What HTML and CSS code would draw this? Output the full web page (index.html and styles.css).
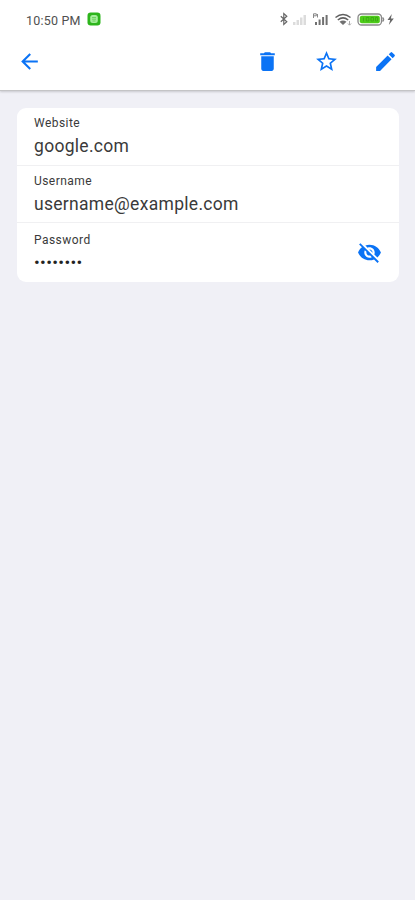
FILE: index.html
```html
<!DOCTYPE html>
<html lang="en">
<head>
<meta charset="utf-8">
<meta name="viewport" content="width=device-width, initial-scale=1">
<title>Password details</title>
<link rel="stylesheet" href="styles.css">
</head>
<body>
<header class="header">
  <div class="status">
    <span class="time">10:50 PM</span>
    <svg class="app" viewBox="0 0 14 14"><rect x=".5" y=".5" width="13" height="13" rx="3.2" fill="#2db51c"/><rect x="3.2" y="3" width="7.6" height="8" rx="2.5" fill="#a5ee9c"/><path d="M5 5.5h4M5 7.2h4M5.5 9h3" stroke="#5fca52" stroke-width=".8"/></svg>
    <svg class="system" viewBox="0 0 118 16" fill="none">
      <path d="M1.800 5.200l6 5.600-3 2.700v-11l3 2.700-6 5.600" stroke="#666" stroke-width="1.200"/>
      <g fill="#dcdcdc"><path d="M14 11h2.500v3H14zM17.500 9H20v5h-2.500zM21 6.500h2.500V14H21zM24.500 4H27v10h-2.500z"/></g>
      <g fill="#707070"><path d="M36 11h2v3h-2zM39.600 8.500h2V14h-2zM43.100 6h2v8h-2zM46.600 4h2v10h-2z"/></g>
      <path d="M34.500 7V2.800h2.800v2h-2.500M38.500 3v3.500" stroke="#888" stroke-width="1"/>
      <path d="M56.500 6.500q7.500-6 15 0M58.800 9q5.200-4.300 10.400 0" stroke="#606060" stroke-width="1.500"/>
      <path d="M60.500 10.800q3.500-2.500 7 0L64 14z" fill="#707070"/>
      <path d="M70.500 10v4M68.900 12.500l1.600 1.700 1.600-1.700" stroke="#aaa" stroke-width="1"/>
      <rect x="79" y="3" width="23.500" height="11" rx="3.500" stroke="#888" stroke-width="1.300"/>
      <path d="M103.500 6.500q2 2 0 4" stroke="#888" stroke-width="1.500"/>
      <rect x="80.800" y="4.800" width="20" height="7.400" rx="2" fill="#4dcc18"/>
      <path d="M84.500 6.500v4M87.300 6.500h2.500v3.500h-2.500zM92 6.500h2.500v3.500H92zM96.500 6.500h2v3.500h-2z" stroke="#38a515" stroke-width=".8"/>
      <path d="M112.800 3l-4.300 6h2.700l-1.400 5 5-6.500h-2.900z" fill="#666"/>
    </svg>
  </div>
  <nav class="toolbar">
    <svg class="icon" viewBox="0 0 24 24"><path d="M20 11H7.830l5.590-5.590L12 4l-8 8 8 8 1.410-1.410L7.830 13H20v-2z"/></svg>
    <div class="actions">
      <svg class="icon" viewBox="0 0 24 24"><path d="M6 19c0 1.100.9 2 2 2h8c1.100 0 2-.9 2-2V7H6v12zM19 4h-3.500l-1-1h-5l-1 1H5v2h14V4z"/></svg>
      <svg class="icon" viewBox="0 0 24 24"><path d="M22 9.240l-7.190-.62L12 2 9.190 8.630 2 9.240l5.460 4.730L5.820 21 12 17.270 18.180 21l-1.630-7.030L22 9.240zM12 15.400l-3.760 2.270 1-4.280-3.320-2.880 4.380-.38L12 6.100l1.710 4.040 4.380.38-3.320 2.880 1 4.280L12 15.400z"/></svg>
      <svg class="icon" viewBox="0 0 24 24"><path d="M3 17.250V21h3.750L17.810 9.940l-3.750-3.750L3 17.250zM20.710 7.040a1 1 0 0 0 0-1.410l-2.340-2.340a1 1 0 0 0-1.410 0l-1.830 1.830 3.750 3.750 1.830-1.830z"/></svg>
    </div>
  </nav>
</header>
<main class="card">
  <section class="row">
    <div class="label">Website</div>
    <div class="value">google.com</div>
  </section>
  <section class="row">
    <div class="label">Username</div>
    <div class="value">username@example.com</div>
  </section>
  <section class="row secret">
    <div>
      <div class="label">Password</div>
      <div class="value dots">••••••••</div>
    </div>
    <svg class="icon" viewBox="0 0 24 24"><path d="M12 7c2.760 0 5 2.240 5 5 0 .65-.13 1.260-.36 1.830l2.920 2.920c1.510-1.260 2.700-2.890 3.430-4.750-1.730-4.390-6-7.500-11-7.500-1.400 0-2.740.25-3.980.7l2.160 2.160C10.740 7.130 11.350 7 12 7zM2 4.270l2.280 2.280.46.460C3.080 8.300 1.780 10.020 1 12c1.730 4.390 6 7.500 11 7.500 1.550 0 3.030-.3 4.380-.84l.42.42L19.730 22 21 20.730 3.270 3 2 4.270zM7.530 9.800l1.550 1.550c-.05.21-.08.43-.08.65 0 1.660 1.340 3 3 3 .22 0 .44-.03.65-.08l1.550 1.550c-.67.33-1.410.53-2.200.53-2.760 0-5-2.240-5-5 0-.79.2-1.530.53-2.200zm4.310-.78l3.150 3.150.02-.16c0-1.660-1.340-3-3-3l-.17.01z"/></svg>
  </section>
</main>
</body>
</html>
```
FILE: styles.css
```css
* { box-sizing: border-box; }
body {
  margin: 0;
  min-height: 100vh;
  background: #f0f0f6;
  font-family: Roboto, "Liberation Sans", sans-serif;
  color: #3a3a3a;
}
.header {
  height: 91px;
  background: #fff;
  border-bottom: 1px solid #c4c4c6;
  box-shadow: 0 1px 2px rgba(0, 0, 0, .16);
}
.status {
  height: 38px;
  padding: 0 18px 0 26px;
  display: flex;
  align-items: center;
}
.time { padding-top: 2px; font-size: 12.500px; letter-spacing: .2px; color: #505050; }
.app { width: 14px; height: 14px; margin-left: 6px; }
.system { width: 118px; height: 16px; margin-left: auto; }
.toolbar {
  height: 46px;
  padding: 0 17px 0 17px;
  display: flex;
  align-items: center;
  justify-content: space-between;
}
.actions { display: flex; gap: 34px; }
.icon { display: block; width: 25px; height: 25px; fill: #0b73f5; }
.card {
  margin: 17px 16px 0 17px;
  height: 174px;
  border-radius: 9px;
  background: #fff;
  display: grid;
  grid-template-rows: 57px 57px 60px;
}
.row { padding: 7px 17px 0; }
.row + .row { border-top: 1px solid #f0f0f2; }
.label { font-size: 12px; line-height: 17px; letter-spacing: .45px; }
.value { font-size: 17.500px; line-height: 29px; letter-spacing: .3px; }
.secret { display: flex; justify-content: space-between; padding-top: 9px; }
.secret .icon { margin-top: 8px; }
.dots { font-size: 17px; line-height: 26px; letter-spacing: .35px; color: #222; }
```
